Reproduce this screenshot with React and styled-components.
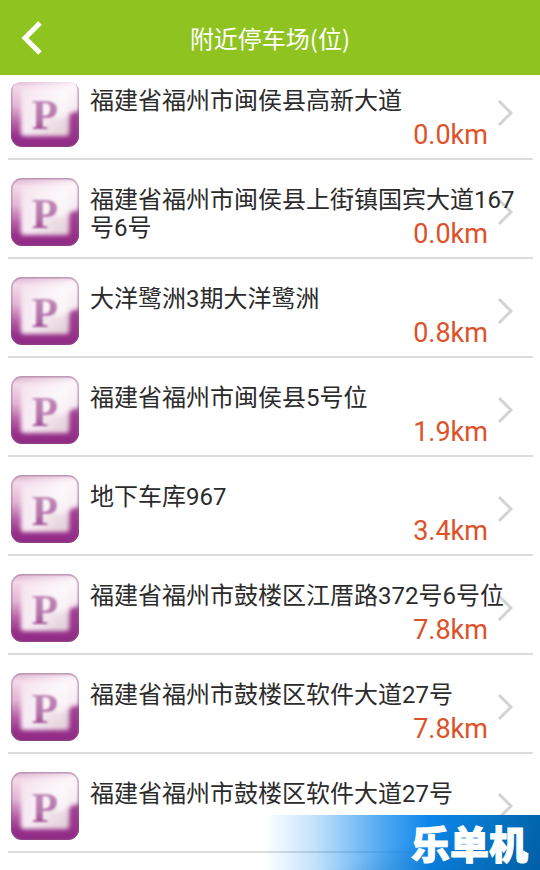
import React, { Component } from 'react';
import styled, { createGlobalStyle, css } from 'styled-components';

const GlobalStyle = createGlobalStyle`
  * {
    box-sizing: border-box;
  }
  body {
    margin: 0;
    background: #fff;
    font-family: Roboto, "Noto Sans CJK SC", sans-serif;
  }
`;

const Page = styled.div`
  position: relative;
  min-height: 100vh;
`;

const Header = styled.header`
  display: grid;
  grid-template-columns: 64px 1fr 64px;
  align-items: center;
  height: 75px;
  background: #8fc31f;
`;

const BackButton = styled.button`
  display: flex;
  align-items: center;
  height: 75px;
  padding: 0 0 0 20px;
  border: none;
  background: transparent;
  cursor: pointer;
`;

const Title = styled.h1`
  margin: 0;
  font-family: "Noto Sans CJK SC", sans-serif;
  font-size: 24px;
  font-weight: 400;
  line-height: 28px;
  text-align: center;
  color: #fff;
`;

const List = styled.ul`
  margin: 0;
  padding: 0 7px 0 8px;
  list-style: none;
`;

const Row = styled.li`
  border-bottom: 2px solid #dcdcdd;
`;

const RowLink = styled.a`
  position: relative;
  display: flex;
  height: 97px;
  padding: 18px 0 0 3px;
  color: #2b2b2b;
  text-decoration: none;
  ${ props => props.$first && css`
    height: 83px;
    padding-top: 4px;
  `}
`;

const Badge = styled.svg`
  flex: none;
  width: 68px;
  height: 68px;
  ${ props => props.$first && css`
    clip-path: inset(3px 0 0 round 9px);
  `}
`;

const Body = styled.div`
  position: relative;
  z-index: 1;
  flex: 1;
  min-width: 0;
  margin-left: 11px;
  padding-top: 8px;
`;

const Address = styled.div`
  height: 28px;
  font-size: 24px;
  line-height: 28px;
`;

const Distance = styled.div`
  margin-top: 4px;
  padding-right: 45px;
  font-size: 27px;
  line-height: 32px;
  text-align: right;
  color: #dd5228;
`;

const Arrow = styled.svg`
  position: absolute;
  right: 17px;
  bottom: 30px;
  width: 20px;
  height: 30px;
`;

const Watermark = styled.div`
  position: absolute;
  z-index: 2;
  right: 0;
  bottom: 0;
  display: flex;
  align-items: center;
  justify-content: flex-end;
  width: 275px;
  height: 55px;
  padding-right: 12px;
  background:
    linear-gradient(160deg, rgba(0, 90, 160, 0) 50%, rgba(0, 90, 160, 0.5) 100%),
    linear-gradient(to right, rgba(20, 140, 240, 0) 0%, rgba(20, 140, 240, 0.25) 18%, rgba(12, 134, 236, 0.7) 42%, #0c86ea 60%, #0878cc 80%, #0068b0 100%);
`;

const Brand = styled.span`
  font-family: "Noto Sans CJK SC", sans-serif;
  font-size: 39px;
  font-weight: 900;
  line-height: 55px;
  color: #fff;
  -webkit-text-stroke: 1px #fff;
`;

const places = [
  { address: '福建省福州市闽侯县高新大道', distance: '0.0km' },
  { address: '福建省福州市闽侯县上街镇国宾大道167号6号', distance: '0.0km' },
  { address: '大洋鹭洲3期大洋鹭洲', distance: '0.8km' },
  { address: '福建省福州市闽侯县5号位', distance: '1.9km' },
  { address: '地下车库967', distance: '3.4km' },
  { address: '福建省福州市鼓楼区江厝路372号6号位', distance: '7.8km' },
  { address: '福建省福州市鼓楼区软件大道27号', distance: '7.8km' },
  { address: '福建省福州市鼓楼区软件大道27号', distance: '' },
];

const HiddenSvg = styled.svg`
  position: absolute;
  width: 0;
  height: 0;
`;

const BadgeDefs = () => (
  <HiddenSvg aria-hidden="true">
    <defs>
      <linearGradient id="rim" x1="0" y1="0" x2="0" y2="1">
        <stop offset="0" stopColor="#dcb4cf"/>
        <stop offset="0.12" stopColor="#f3d8e9"/>
        <stop offset="0.4" stopColor="#e3b3d3"/>
        <stop offset="0.65" stopColor="#b55fa6"/>
        <stop offset="0.85" stopColor="#97308a"/>
        <stop offset="1" stopColor="#8f2a85"/>
      </linearGradient>
      <linearGradient id="gloss" x1="0" y1="0" x2="1" y2="0">
        <stop offset="0" stopColor="#fff" stopOpacity="0"/>
        <stop offset="1" stopColor="#fff" stopOpacity="0.85"/>
      </linearGradient>
      <linearGradient id="face" x1="0" y1="0" x2="1" y2="1">
        <stop offset="0" stopColor="#f5e2ef"/>
        <stop offset="0.5" stopColor="#f8edf4"/>
        <stop offset="1" stopColor="#dfcbd3"/>
      </linearGradient>
      <linearGradient id="letter" x1="0" y1="0" x2="0" y2="1">
        <stop offset="0" stopColor="#c795bd"/>
        <stop offset="0.6" stopColor="#b474aa"/>
        <stop offset="1" stopColor="#8f2a85"/>
      </linearGradient>
      <filter id="soft" x="-20%" y="-20%" width="140%" height="140%">
        <feGaussianBlur stdDeviation="2"/>
      </filter>
      <filter id="softLetter">
        <feGaussianBlur stdDeviation="0.8"/>
      </filter>
      <clipPath id="badgeShape">
        <rect width="68" height="68" rx="11"/>
      </clipPath>
    </defs>
  </HiddenSvg>
);

const ParkingBadge = ({ first }) => (
  <Badge viewBox="0 0 68 68" $first={ first } aria-hidden="true">
    <g clipPath="url(#badgeShape)">
      <rect width="68" height="68" fill="url(#rim)"/>
      <path d="M57 37Q62 33 70 32V60H57Z" fill="#97308a" opacity="0.8" filter="url(#soft)"/>
      <rect x="10" y="9" width="48" height="48" rx="3" fill="url(#face)" filter="url(#soft)"/>
      <path d="M10 2H67V31Q57 33 50 40L10 30Z" fill="url(#gloss)" filter="url(#soft)"/>
      <rect x="0" y="0" width="68" height="68" rx="11" fill="none" stroke="#8d5c84" strokeOpacity="0.4" strokeWidth="3"/>
    </g>
    <text
      x="34" y="50" textAnchor="middle" fill="url(#letter)" filter="url(#softLetter)"
      fontFamily="Liberation Serif, serif" fontWeight="700" fontSize="43"
    >P</text>
  </Badge>
);

class App extends Component {

  render() {
    return (
      <Page>
        <GlobalStyle/>
        <BadgeDefs/>
        <Header>
          <BackButton aria-label="返回">
            <svg width="24" height="36" viewBox="0 0 24 36" fill="none">
              <path d="M20 3L5 18L20 33" stroke="#fff" strokeWidth="5"/>
            </svg>
          </BackButton>
          <Title>附近停车场(位)</Title>
        </Header>
        <List>
          { places.map((place, i) => (
            <Row key={ i }>
              <RowLink href="#" $first={ i === 0 }>
                <ParkingBadge first={ i === 0 }/>
                <Body>
                  <Address>{ place.address }</Address>
                  <Distance>{ place.distance }</Distance>
                </Body>
                <Arrow viewBox="0 0 20 30" fill="none" aria-hidden="true">
                  <path d="M3 3L15 15L3 27" stroke="#d3d3d4" strokeWidth="3"/>
                </Arrow>
              </RowLink>
            </Row>
          )) }
        </List>
        <Watermark>
          <Brand>乐单机</Brand>
        </Watermark>
      </Page>
    );
  }
}

export default App;
